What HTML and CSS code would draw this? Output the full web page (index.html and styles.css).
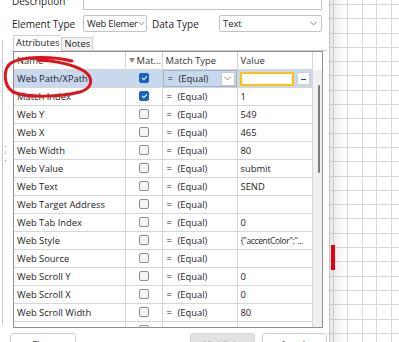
FILE: index.html
```html
<!DOCTYPE html>
<html lang="en">
<head>
    <meta charset="UTF-8">
    <meta name="viewport" content="width=device-width, initial-scale=1.0">
    <title>Element Attributes</title>
    <link rel="stylesheet" href="styles.css">
</head>
<body>
    <div class="app">
        <div class="side">
            <div class="edge"><span class="grip"></span></div>
            <div class="main">
                <div class="field desc">
                    <span class="lbl">Description</span>
                    <div class="textbox"></div>
                </div>
                <div class="field">
                    <span class="lbl">Element Type</span>
                    <div class="combo elem">
                        <span>Web Elemer</span>
                        <svg class="chev" viewBox="0 0 8 5"><path d="M0.5 0.5 L4 4 L7.5 0.5" /></svg>
                    </div>
                    <span class="lbl lbl2">Data Type</span>
                    <div class="combo dtype">
                        <span>Text</span>
                        <svg class="chev" viewBox="0 0 8 5"><path d="M0.5 0.5 L4 4 L7.5 0.5" /></svg>
                    </div>
                </div>

                <div class="tabs">
                    <div class="tab active">Attributes</div>
                    <div class="tab">Notes</div>
                </div>

                <div class="tabpage">
                    <div class="gridbox">
                        <table class="attrs">
                            <colgroup>
                                <col class="c-name">
                                <col class="c-match">
                                <col class="c-type">
                                <col class="c-value">
                            </colgroup>
                            <thead>
                                <tr>
                                    <th>Name</th>
                                    <th class="th-match"><span class="funnel"></span>Mat...</th>
                                    <th>Match Type</th>
                                    <th>Value</th>
                                </tr>
                            </thead>
                            <tbody>
                                <tr class="selected">
                                    <td>Web Path/XPath</td>
                                    <td class="chk"><span class="box on"></span></td>
                                    <td class="edit-type">
                                        <div class="cellcombo">
                                            <span class="eq">=</span><span>(Equal)</span>
                                            <span class="dd"><svg class="chev" viewBox="0 0 8 5"><path d="M0.5 0.5 L4 4 L7.5 0.5" /></svg></span>
                                        </div>
                                    </td>
                                    <td class="edit-value">
                                        <div class="cellinput">
                                            <span class="inputbox"></span>
                                            <span class="dots"><i></i></span>
                                        </div>
                                    </td>
                                </tr>
                                <tr><td>Match Index</td><td class="chk"><span class="box on"></span></td><td><span class="eq">=</span>(Equal)</td><td>1</td></tr>
                                <tr><td>Web Y</td><td class="chk"><span class="box"></span></td><td><span class="eq">=</span>(Equal)</td><td>549</td></tr>
                                <tr><td>Web X</td><td class="chk"><span class="box"></span></td><td><span class="eq">=</span>(Equal)</td><td>465</td></tr>
                                <tr><td>Web Width</td><td class="chk"><span class="box"></span></td><td><span class="eq">=</span>(Equal)</td><td>80</td></tr>
                                <tr><td>Web Value</td><td class="chk"><span class="box"></span></td><td><span class="eq">=</span>(Equal)</td><td>submit</td></tr>
                                <tr><td>Web Text</td><td class="chk"><span class="box"></span></td><td><span class="eq">=</span>(Equal)</td><td>SEND</td></tr>
                                <tr><td>Web Target Address</td><td class="chk"><span class="box"></span></td><td><span class="eq">=</span>(Equal)</td><td></td></tr>
                                <tr><td>Web Tab Index</td><td class="chk"><span class="box"></span></td><td><span class="eq">=</span>(Equal)</td><td>0</td></tr>
                                <tr><td>Web Style</td><td class="chk"><span class="box"></span></td><td><span class="eq">=</span>(Equal)</td><td class="clip">{"accentColor":"...</td></tr>
                                <tr><td>Web Source</td><td class="chk"><span class="box"></span></td><td><span class="eq">=</span>(Equal)</td><td></td></tr>
                                <tr><td>Web Scroll Y</td><td class="chk"><span class="box"></span></td><td><span class="eq">=</span>(Equal)</td><td>0</td></tr>
                                <tr><td>Web Scroll X</td><td class="chk"><span class="box"></span></td><td><span class="eq">=</span>(Equal)</td><td>0</td></tr>
                                <tr><td>Web Scroll Width</td><td class="chk"><span class="box"></span></td><td><span class="eq">=</span>(Equal)</td><td>80</td></tr>
                                <tr><td>Web Scroll Height</td><td class="chk"><span class="box"></span></td><td><span class="eq">=</span>(Equal)</td><td>46</td></tr>
                            </tbody>
                        </table>
                        <div class="vscroll">
                            <div class="vscroll-head"></div>
                            <div class="vscroll-track"><div class="thumb"></div></div>
                        </div>
                    </div>
                </div>

                <div class="buttons">
                    <div class="btn close">Close</div>
                    <div class="spacer"></div>
                    <div class="btn disabled">Highlight</div>
                    <div class="btn">Attach</div>
                </div>
            </div>
        </div>
        <div class="canvas">
            <div class="marker"></div>
        </div>
    </div>

    <!-- hand drawn annotation over the first row -->
    <svg class="scribble" viewBox="0 0 100 100" width="100" height="100">
        <path d="M72 61 C52 56, 22 56, 11 63 C3 69, 3 85, 13 92 C27 98, 60 97, 80 92 C93 88, 94 78, 84 71 C74 65, 56 61, 38 60" />
    </svg>
</body>
</html>
```

FILE: styles.css
```css
body {
    margin: 0;
    background: #ffffff;
    font-family: "Open Sans", "Noto Sans", sans-serif;
    font-size: 9.4px;
    color: #1e1e1e;
    overflow: hidden;
}

.app {
    display: flex;
    height: 342px;
}

.side {
    width: 329px;
    display: flex;
    flex-shrink: 0;
}

.edge {
    width: 9px;
    flex-shrink: 0;
    box-sizing: border-box;
    margin-top: 40px;
    height: 285px;
    border-left: 1px solid #c9c9c9;
    margin-left: 2px;
    padding-top: 106px;
}

.grip {
    display: block;
    margin-left: 2px;
    width: 1px;
    height: 16px;
    background: repeating-linear-gradient(to bottom, #9a9a9a 0 1px, transparent 1px 7px);
}

.main {
    flex: 1;
    display: flex;
    flex-direction: column;
    padding-left: 1px;
    padding-right: 2px;
}

.field {
    display: flex;
    align-items: center;
    height: 17px;
    margin-top: 5px;
}

.field.desc {
    margin-top: -10px;
    height: 20px;
    align-items: flex-start;
}

.lbl {
    width: 71px;
    flex-shrink: 0;
    white-space: nowrap;
    font-size: 10px;
}

.desc .lbl {
    padding-top: 4px;
}

.textbox {
    width: 239px;
    height: 20px;
    box-sizing: border-box;
    border: 1px solid #c4c4c4;
    background: #fff;
}

.combo {
    height: 17px;
    box-sizing: border-box;
    border: 1px solid #c4c4c4;
    border-radius: 2px;
    background: #fff;
    display: flex;
    align-items: center;
    justify-content: space-between;
    padding: 0 4px 0 3px;
    white-space: nowrap;
    overflow: hidden;
}

.combo.elem {
    width: 64px;
    letter-spacing: -0.2px;
}

.combo.dtype {
    width: 103px;
}

.lbl2 {
    width: 67px;
    margin-left: 5px;
}

.chev {
    width: 7px;
    height: 5px;
    flex-shrink: 0;
    fill: none;
    stroke: #666;
    stroke-width: 0.9;
}

.tabs {
    display: flex;
    align-items: flex-end;
    margin-top: 3px;
    height: 15px;
    padding-left: 1px;
}

.tab {
    height: 13px;
    box-sizing: border-box;
    padding: 0 2px;
    line-height: 12px;
    border: 1px solid #d0d0d0;
    border-bottom: none;
    background: #f3f3f3;
    white-space: nowrap;
}

.tab.active {
    height: 16px;
    line-height: 14px;
    background: #fff;
    position: relative;
    top: 1px;
    border-right: none;
}

.tabpage {
    border-top: 1px solid #d0d0d0;
    padding-left: 1px;
}

.gridbox {
    display: flex;
    width: 310px;
    height: 277px;
    box-sizing: border-box;
    border: 1px solid #8e8e8e;
    overflow: hidden;
    background: #fff;
}

.attrs {
    border-collapse: collapse;
    table-layout: fixed;
    width: 298px;
    flex-shrink: 0;
}

.c-name { width: 111px; }
.c-match { width: 37px; }
.c-type { width: 75px; }
.c-value { width: 75px; }

.attrs th {
    height: 17px;
    padding: 0 0 0 3px;
    font-weight: normal;
    text-align: left;
    line-height: 17px;
    border-right: 1px solid #d6d6d6;
    border-bottom: 1px solid #d6d6d6;
    white-space: nowrap;
    overflow: hidden;
    color: #333;
}

.attrs td {
    height: 17px;
    padding: 0 0 0 3px;
    line-height: 17px;
    border-right: 1px solid #d6d6d6;
    border-bottom: 1px solid #d6d6d6;
    white-space: nowrap;
    overflow: hidden;
}

.attrs td.clip {
    font-size: 8.4px;
    letter-spacing: -0.3px;
}

.th-match {
    padding-left: 3px;
}

.funnel {
    display: inline-block;
    width: 0;
    height: 0;
    border-left: 3px solid transparent;
    border-right: 3px solid transparent;
    border-top: 5px solid #8a8a8a;
    margin-right: 2px;
    vertical-align: 1px;
}

.attrs td.chk {
    padding: 0;
    text-align: center;
}

.box {
    display: inline-block;
    width: 10px;
    height: 10px;
    box-sizing: border-box;
    border: 1px solid #8d8d8d;
    border-radius: 2px;
    background: #f4f4f4;
    vertical-align: middle;
    position: relative;
    top: -1px;
}

.box.on {
    border-color: #1b5fc1;
    background: #1b62c6;
}

.box.on::after {
    content: "";
    position: absolute;
    left: 2px;
    top: 1px;
    width: 4px;
    height: 2px;
    border-left: 1px solid #fff;
    border-bottom: 1px solid #fff;
    transform: rotate(-45deg);
    transform-origin: center;
    margin-top: 1px;
}

.eq {
    display: inline-block;
    width: 11px;
    padding-left: 1px;
}

tr.selected td {
    background: #c8d8ef;
}

.attrs td.edit-type,
.attrs td.edit-value {
    padding: 0;
}

.cellcombo {
    display: flex;
    align-items: center;
    height: 17px;
    box-sizing: border-box;
    border: 1px solid #9fb3cf;
    padding-left: 3px;
}

.cellcombo .dd {
    margin-left: auto;
    width: 14px;
    height: 14px;
    box-sizing: border-box;
    background: #fff;
    border: 1px solid #c9c9c9;
    display: flex;
    align-items: center;
    justify-content: center;
    margin-right: 1px;
}

.cellinput {
    display: flex;
    align-items: center;
    height: 17px;
    padding-left: 2px;
    gap: 3px;
}

.inputbox {
    width: 54px;
    height: 14px;
    box-sizing: border-box;
    border: 2px solid #ffc20e;
    background: #fff;
}

.dots {
    width: 13px;
    height: 13px;
    box-sizing: border-box;
    border: 1px solid #cfcfcf;
    background: #fff;
    display: flex;
    align-items: center;
    justify-content: center;
}

.dots i {
    display: block;
    width: 5px;
    height: 1px;
    background: #3b4a5f;
    margin-top: 2px;
}

.vscroll {
    flex: 1;
    display: flex;
    flex-direction: column;
}

.vscroll-head {
    height: 18px;
    background: #fff;
}

.vscroll-track {
    flex: 1;
    background: #f0f0f0;
    padding-top: 15px;
}

.thumb {
    width: 2px;
    height: 88px;
    margin-left: 5px;
    background: #7c7c7c;
    border-radius: 1px;
}

.buttons {
    display: flex;
    margin-top: 5px;
    margin-left: -2px;
    gap: 7px;
}

.btn {
    width: 65px;
    height: 20px;
    box-sizing: border-box;
    border: 1px solid #cfcfcf;
    border-radius: 3px;
    background: #fff;
    text-align: center;
    padding-top: 4px;
}

.btn.close {
    width: 66px;
}

.btn.disabled {
    background: #e2e2e2;
    color: #8a8a8a;
    border-color: #d6d6d6;
}

.spacer {
    flex: 1;
}

.canvas {
    flex: 1;
    position: relative;
    border-left: 1px solid #c7c7c7;
    background:
        linear-gradient(to right, rgba(0, 0, 0, 0.09), rgba(0, 0, 0, 0) 16px),
        repeating-linear-gradient(to right, transparent 0 3px, #d9d9d9 3px 4px, transparent 4px 14.45px),
        repeating-linear-gradient(to bottom, transparent 0 4px, #d9d9d9 4px 5px, transparent 5px 14.3px),
        #ffffff;
}

.marker {
    position: absolute;
    left: 1px;
    top: 245px;
    width: 4px;
    height: 25px;
    background: #e5000e;
}

.scribble {
    position: absolute;
    left: 0;
    top: 0;
    fill: none;
    stroke: #e0121c;
    stroke-width: 3;
    stroke-linecap: round;
}
```
